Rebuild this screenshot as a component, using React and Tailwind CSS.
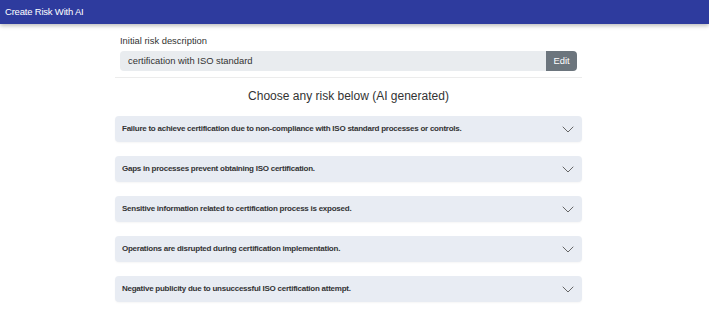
import React from "react";

const risks = [
  "Failure to achieve certification due to non-compliance with ISO standard processes or controls.",
  "Gaps in processes prevent obtaining ISO certification.",
  "Sensitive information related to certification process is exposed.",
  "Operations are disrupted during certification implementation.",
  "Negative publicity due to unsuccessful ISO certification attempt.",
];

function Chevron() {
  return (
    <svg width="12" height="7" viewBox="0 0 12 7" fill="none" className="shrink-0">
      <path d="M1 1l5 5 5-5" stroke="#666" strokeWidth="1" strokeLinecap="round" strokeLinejoin="round" />
    </svg>
  );
}

export default function App() {
  return (
    <div className="w-[709px] h-[331px] bg-white overflow-hidden" style={{ fontFamily: '"Liberation Sans", Arial, sans-serif' }}>
      <div className="h-[24px] bg-[#2e3b9e] flex items-center px-[5px] shadow-[0_2px_4px_rgba(0,0,0,0.25)]">
        <span className="text-white text-[9.5px] tracking-[-0.2px]">Create Risk With AI</span>
      </div>
      <div className="ml-[115px] w-[467px]">
        <div className="px-[5px] pt-[11px]">
          <div className="text-[9.4px] text-[#333] leading-[12px]">Initial risk description</div>
          <div className="mt-[4px] flex h-[20px] rounded-[4px] overflow-hidden">
            <div className="flex-1 bg-[#e9ecef] flex items-center pl-[8px] text-[9.4px] text-[#333]">certification with ISO standard</div>
            <div className="w-[31px] bg-[#6c757d] text-white text-[9.4px] flex items-center justify-center">Edit</div>
          </div>
        </div>
        <div className="mt-[6px] h-px bg-[#ececec]" />
        <div className="mt-[11px] text-center text-[12px] text-[#333] leading-[14px]">Choose any risk below (AI generated)</div>
        <div className="mt-[13px] flex flex-col gap-[14px]">
          {risks.map((r) => (
            <div key={r} className="h-[26px] bg-[#e8ecf3] rounded-[4px] flex items-center justify-between pl-[7px] pr-[8px] shadow-[0_1px_2px_rgba(0,0,0,0.04)]">
              <span className="text-[8px] tracking-[-0.25px] font-bold text-[#333]">{r}</span>
              <Chevron />
            </div>
          ))}
        </div>
      </div>
    </div>
  );
}
